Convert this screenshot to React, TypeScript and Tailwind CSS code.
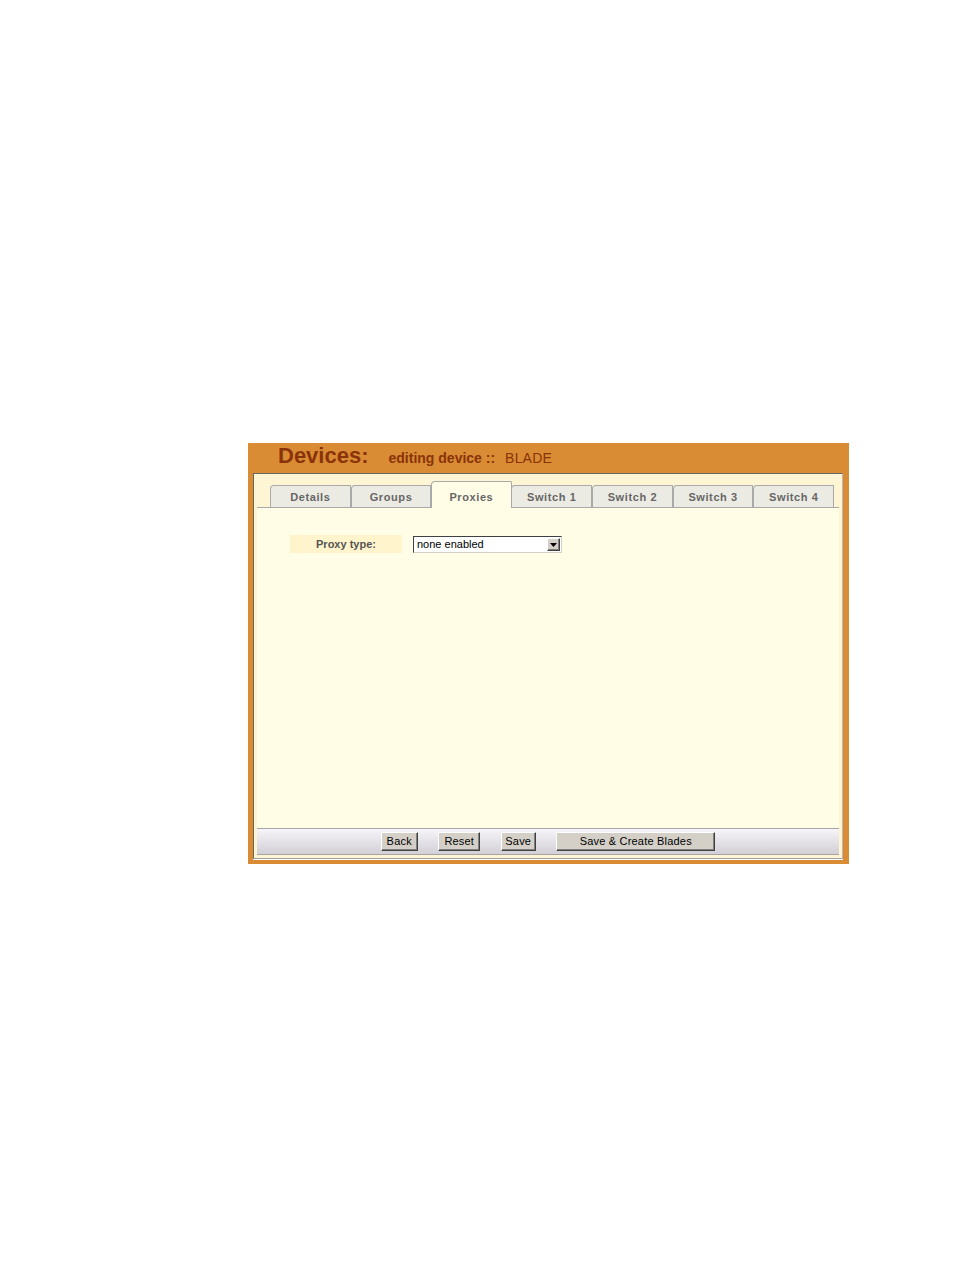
import React from "react";

const tabs = ["Details", "Groups", "Proxies", "Switch 1", "Switch 2", "Switch 3", "Switch 4"];

function Tab({ label, active }: { label: string; active?: boolean }) {
  if (active) {
    return (
      <div className="relative z-10 -mb-px flex h-[27px] w-[81px] -mx-[0.5px] items-center justify-center rounded-tl-[4px] rounded-tr-[2px] border-l border-r border-t border-[#a9a9a9] bg-[#fffde6] pt-[4px] text-[11px] font-bold tracking-[0.6px] text-[#666666]">
        {label}
      </div>
    );
  }
  return (
    <div className="flex h-[22px] w-[80.7px] items-center justify-center rounded-tl-[4px] rounded-tr-[1px] border-l border-r border-t border-[#a9a9a9] bg-[#ecebe3] pt-[1px] text-[11px] font-bold tracking-[0.6px] text-[#666666]">
      {label}
    </div>
  );
}

function Btn({ label, w }: { label: string; w: string }) {
  return (
    <button
      className={`${w} flex h-[19px] items-center justify-center border-b border-l border-r border-t border-b-[#404040] border-l-white border-r-[#404040] border-t-white bg-[#d4d0c8] text-[11px] leading-none tracking-[0.2px] text-black shadow-[inset_-1px_-1px_0_#808080]`}
      style={{ fontFamily: '"Liberation Sans", Arial, sans-serif' }}
    >
      {label}
    </button>
  );
}

export default function App() {
  return (
    <div
      className="min-h-[1272px] w-[954px] bg-white pl-[248px] pt-[443px]"
      style={{ fontFamily: '"Liberation Sans", Arial, sans-serif' }}
    >
      <div className="flex h-[421px] w-[601px] flex-col bg-[#d98c34] pb-[5px] pl-[5px] pr-[6px]">
        {/* header */}
        <div className="flex h-[30px] items-baseline pl-[25px] pt-[2px] text-[#8a330a]">
          <span className="text-[22px] font-bold leading-[22px]">Devices:</span>
          <span className="ml-[20px] text-[14px] font-bold leading-none">editing device ::</span>
          <span className="ml-[10px] text-[14px] tracking-[0.2px] leading-none">BLADE</span>
        </div>

        {/* inner panel */}
        <div className="flex h-[386px] w-[590px] flex-col border-b border-l border-r border-t border-b-[#a0a0a0] border-l-[#666666] border-r-[#b8b8b8] border-t-[#666666] bg-[#fdf5d3] px-[3px] pb-[3px] pt-[7px] shadow-[0_1px_0_#ffffff]">
          {/* tab row */}
          <div className="flex h-[26px] items-end pl-[13px]">
            {tabs.map((t) => (
              <Tab key={t} label={t} active={t === "Proxies"} />
            ))}
          </div>

          {/* content */}
          <div className="h-[321px] border-t border-[#a9a9a9] bg-[#fffde6] pl-[33px] pt-[27px]">
            <div className="flex items-start">
              <div className="flex h-[18px] w-[112px] items-center justify-center bg-[#fff4cc] text-[11px] font-bold text-[#555555]">
                Proxy type:
              </div>
              <div className="ml-[11px] mt-[1px] flex h-[17px] w-[149px] items-center border-b border-l border-r border-t border-b-[#d4d0c8] border-l-[#404040] border-r-[#d4d0c8] border-t-[#404040] bg-white">
                <span className="flex-1 pl-[3px] text-[11px] leading-none text-black">none enabled</span>
                <div className="mr-[1px] flex h-[13px] w-[13px] items-center justify-center border-b border-l border-r border-t border-b-[#404040] border-l-white border-r-[#404040] border-t-white bg-[#d4d0c8] shadow-[inset_-1px_-1px_0_#808080]">
                  <svg width="7" height="4" viewBox="0 0 7 4">
                    <path d="M0 0H7L3.5 4Z" fill="#000" />
                  </svg>
                </div>
              </div>
            </div>
          </div>

          {/* footer */}
          <div className="flex h-[27px] items-center justify-center gap-[20.5px] border-b border-t border-[#a5a5a5] bg-gradient-to-b from-[#f7f5f9] to-[#d2d0d6]">
            <Btn label="Back" w="w-[37px]" />
            <Btn label="Reset" w="w-[42px]" />
            <Btn label="Save" w="w-[35px]" />
            <Btn label="Save & Create Blades" w="w-[159px]" />
          </div>
        </div>
      </div>
    </div>
  );
}
